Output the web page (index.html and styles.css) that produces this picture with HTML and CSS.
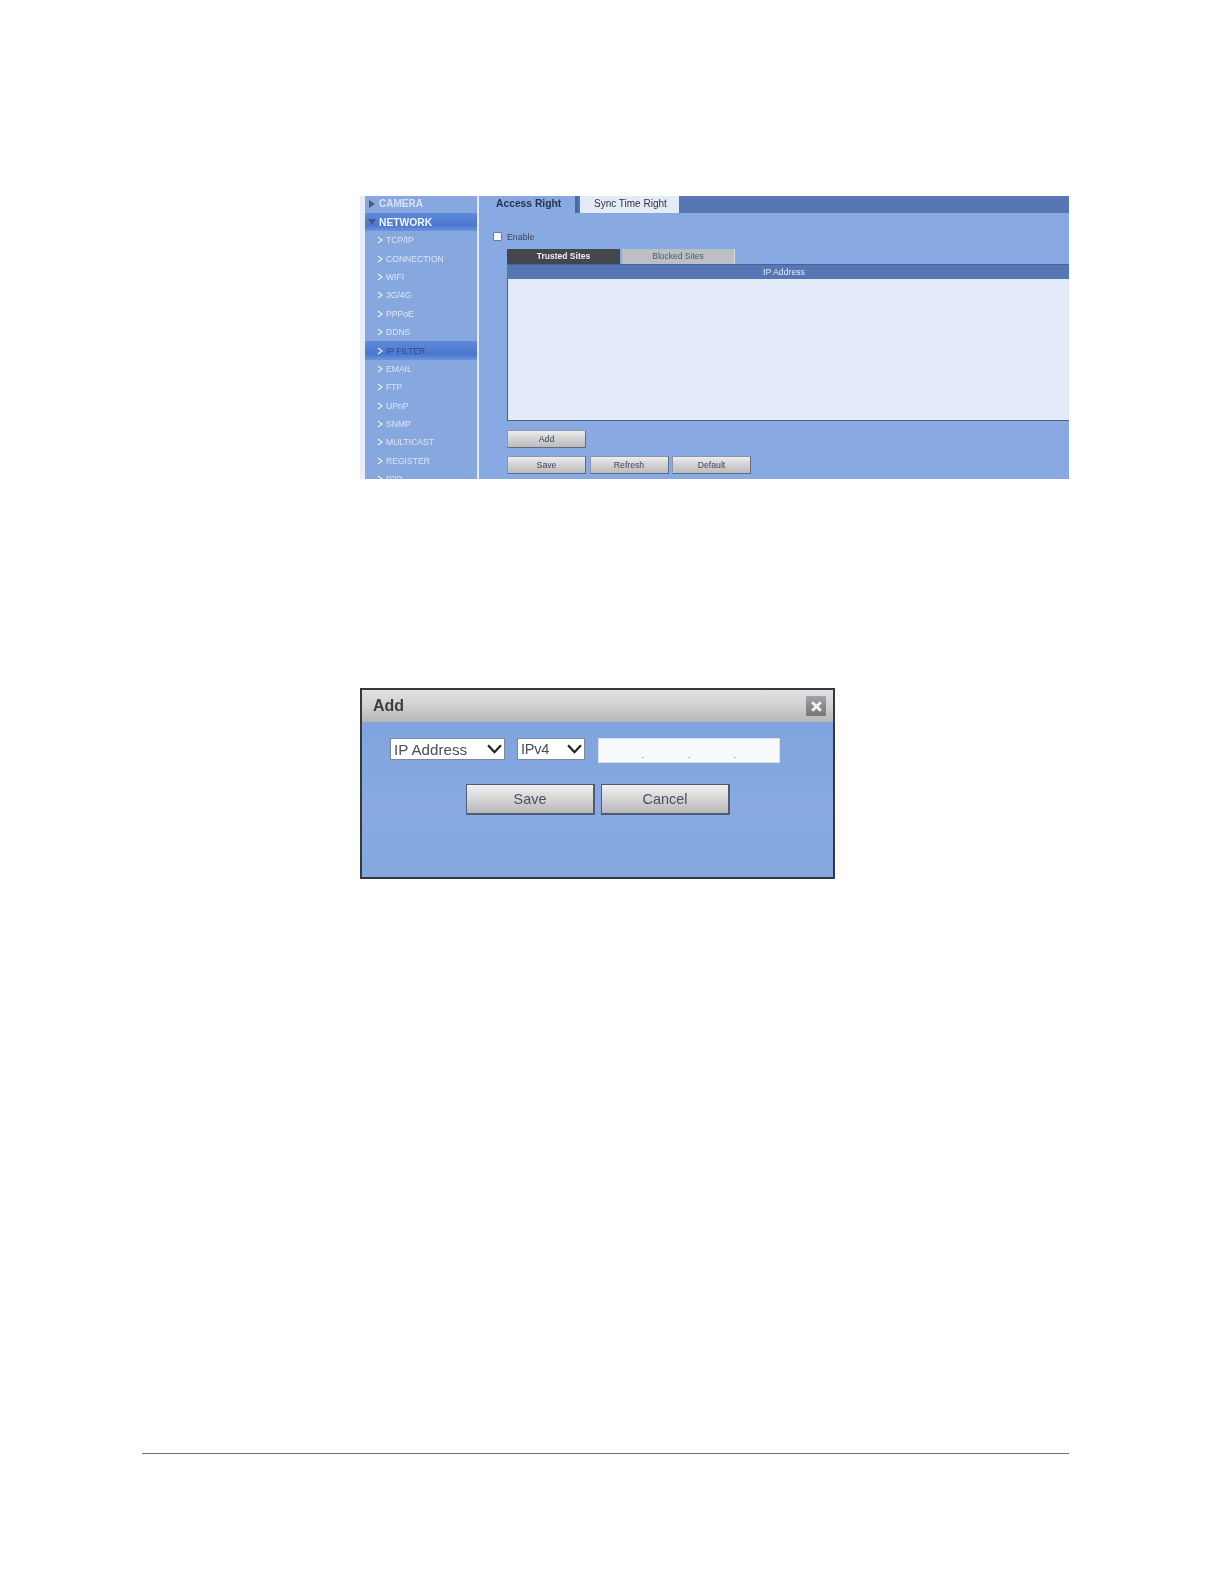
FILE: index.html
```html
<!DOCTYPE html>
<html lang="en">
<head>
<meta charset="utf-8">
<title>IP Filter</title>
<link rel="stylesheet" href="styles.css">
</head>
<body>
<main class="page">
  <section class="shot">
    <div class="strip"></div>
    <nav class="side">
      <div class="head first"><svg class="tri" viewBox="0 0 8 8"><path d="M1 0 L7 4 L1 8 Z"/></svg>CAMERA</div>
      <div class="head on"><svg class="tri" viewBox="0 0 8 8"><path d="M0 1 L8 1 L4 7 Z"/></svg>NETWORK</div>
      <div class="item"><svg class="chev" viewBox="0 0 6 8"><path d="M1 1 L5 4 L1 7"/></svg>TCP/IP</div>
      <div class="item"><svg class="chev" viewBox="0 0 6 8"><path d="M1 1 L5 4 L1 7"/></svg>CONNECTION</div>
      <div class="item"><svg class="chev" viewBox="0 0 6 8"><path d="M1 1 L5 4 L1 7"/></svg>WIFI</div>
      <div class="item"><svg class="chev" viewBox="0 0 6 8"><path d="M1 1 L5 4 L1 7"/></svg>3G/4G</div>
      <div class="item"><svg class="chev" viewBox="0 0 6 8"><path d="M1 1 L5 4 L1 7"/></svg>PPPoE</div>
      <div class="item"><svg class="chev" viewBox="0 0 6 8"><path d="M1 1 L5 4 L1 7"/></svg>DDNS</div>
      <div class="item sel"><svg class="chev" viewBox="0 0 6 8"><path d="M1 1 L5 4 L1 7"/></svg>IP FILTER</div>
      <div class="item"><svg class="chev" viewBox="0 0 6 8"><path d="M1 1 L5 4 L1 7"/></svg>EMAIL</div>
      <div class="item"><svg class="chev" viewBox="0 0 6 8"><path d="M1 1 L5 4 L1 7"/></svg>FTP</div>
      <div class="item"><svg class="chev" viewBox="0 0 6 8"><path d="M1 1 L5 4 L1 7"/></svg>UPnP</div>
      <div class="item"><svg class="chev" viewBox="0 0 6 8"><path d="M1 1 L5 4 L1 7"/></svg>SNMP</div>
      <div class="item"><svg class="chev" viewBox="0 0 6 8"><path d="M1 1 L5 4 L1 7"/></svg>MULTICAST</div>
      <div class="item"><svg class="chev" viewBox="0 0 6 8"><path d="M1 1 L5 4 L1 7"/></svg>REGISTER</div>
      <div class="item"><svg class="chev" viewBox="0 0 6 8"><path d="M1 1 L5 4 L1 7"/></svg>P2P</div>
    </nav>
    <div class="content">
      <div class="tabs">
        <div class="tab-active">Access Right</div>
        <div class="tab-other">Sync Time Right</div>
      </div>
      <div class="enable"><span class="check"></span><span>Enable</span></div>
      <div class="panel">
        <div class="subtabs">
          <div class="sub dark">Trusted Sites</div>
          <div class="sub grey">Blocked Sites</div>
        </div>
        <div class="thead">IP Address</div>
        <div class="tlist"></div>
        <div class="row add-row"><div class="btn">Add</div></div>
        <div class="row"><div class="btn">Save</div><div class="btn">Refresh</div><div class="btn">Default</div></div>
      </div>
    </div>
  </section>

  <section class="dialog">
    <header class="dtitle">
      <span>Add</span>
      <span class="close"><svg viewBox="0 0 12 12"><path d="M2 2 L10 10 M10 2 L2 10"/></svg></span>
    </header>
    <div class="fields">
      <div class="select wide">IP Address<svg viewBox="0 0 14 9"><path d="M1 1 L7 7.5 L13 1"/></svg></div>
      <div class="select narrow">IPv4<svg viewBox="0 0 14 9"><path d="M1 1 L7 7.5 L13 1"/></svg></div>
      <div class="ip"><i>.</i><i>.</i><i>.</i></div>
    </div>
    <div class="dbtns">
      <div class="dbtn">Save</div>
      <div class="dbtn">Cancel</div>
    </div>
  </section>

  <hr class="rule">
</main>
</body>
</html>
```
FILE: styles.css
```css
* { box-sizing: border-box; }
html, body { margin: 0; padding: 0; background: #fff; }
body { font-family: "Liberation Sans", Arial, sans-serif; color: #333; }
.page { height: 1584px; padding-top: 196px; overflow: hidden; }

.shot {
  display: flex;
  width: 709px;
  height: 283px;
  margin-left: 360px;
  overflow: hidden;
  background: #86a8e0;
  filter: blur(0.45px);
}
.strip { flex: 0 0 5px; background: #e6edf8; }
.side { flex: 0 0 112px; background: #86a8de; }
.head {
  display: flex;
  align-items: center;
  height: 18.4px;
  padding-left: 3px;
  font-size: 10px;
  font-weight: bold;
  color: #e4ecf8;
}
.head.first { height: 17px; padding-bottom: 2px; color: #d8e2f4; }
.head.on {
  height: 18px;
  font-size: 10.3px;
  color: #f2f6fd;
  background: linear-gradient(#5f8ad8, #4a78d0 70%, #6c95dc);
}
.tri { width: 8px; height: 8px; margin-right: 3px; fill: #4e5870; }
.item {
  display: flex;
  align-items: center;
  height: 18.4px;
  padding-left: 12px;
  font-size: 8.6px;
  color: #dde6f6;
}
.item.sel {
  color: #2e4a80;
  background: linear-gradient(#5f8ad8, #4a78d0 70%, #6c95dc);
}
.chev {
  width: 6px;
  height: 8px;
  margin-right: 3px;
  fill: none;
  stroke: #eef3fb;
  stroke-width: 1.1;
}
.content {
  flex: 1;
  min-width: 0;
  border-left: 2px solid #e2eaf7;
  background: #88a9e1;
}
.tabs { display: flex; height: 17px; background: #5677b3; }
.tab-active {
  flex: 0 0 99px;
  padding-left: 17px;
  border-right: 3px solid #4a6aa6;
  background: #88a9e1;
  font-size: 10.3px;
  font-weight: bold;
  line-height: 15px;
  color: #26344f;
}
.tab-other {
  flex: 0 0 99px;
  margin-left: 2px;
  padding-left: 14px;
  background: #e3ebf8;
  font-size: 10px;
  line-height: 15px;
  color: #333;
}
.enable {
  display: flex;
  align-items: center;
  height: 11px;
  margin-top: 18px;
  padding-left: 12px;
  font-size: 8.8px;
  color: #3a4660;
}
.check {
  width: 9px;
  height: 9px;
  margin: 0 5px 0 2px;
  background: #f4f6fa;
  border: 1px solid #6d7a90;
  border-radius: 1px;
}
.panel { margin: 7px 0 0 28px; }
.subtabs { display: flex; gap: 2px; height: 15px; }
.sub {
  flex: 0 0 113px;
  font-size: 8.5px;
  line-height: 15px;
  text-align: center;
}
.sub.dark { background: #43464b; color: #f0f0f0; font-weight: bold; }
.sub.grey { background: #bcbfc4; color: #4e5a70; border-right: 1px solid #cfe0d0; }
.thead {
  height: 15px;
  padding-right: 8px;
  background: #5677b3;
  border-top: 1px solid #45639c;
  font-size: 8.7px;
  line-height: 15px;
  text-align: center;
  color: #e6edf8;
}
.tlist {
  height: 142px;
  background: #e3ebf8;
  border: 1px solid #4e617f;
  border-width: 0 0 1px 1px;
}
.row { display: flex; gap: 3.5px; margin-top: 8px; }
.add-row { margin-top: 9px; }
.btn {
  flex: 0 0 79px;
  height: 18px;
  background: linear-gradient(#ededed, #cfcfcf 55%, #bdbdbd);
  border: 1px solid #5c6c86;
  border-top-color: #8a96aa;
  border-left-color: #8a96aa;
  font-size: 8.7px;
  line-height: 17px;
  text-align: center;
  color: #3c4657;
}

.dialog {
  width: 475px;
  height: 191px;
  margin: 209px 0 0 360px;
  background: linear-gradient(#7da2dd, #88a9e1 60%, #86a8e0);
  border: 2px solid #35383d;
  filter: blur(0.4px);
}
.dtitle {
  display: flex;
  align-items: center;
  justify-content: space-between;
  height: 32px;
  padding: 0 7px 0 11px;
  background: linear-gradient(#e2e2e0, #d0d0ce 50%, #b6b7b5);
  font-size: 16px;
  font-weight: bold;
  color: #3b3f45;
}
.close {
  display: flex;
  align-items: center;
  justify-content: center;
  width: 20px;
  height: 20px;
  background: linear-gradient(#9fa3a8, #74787d);
  border-radius: 1px;
}
.close svg { width: 13px; height: 13px; fill: none; stroke: #f4f4f4; stroke-width: 2.6; }
.fields {
  display: flex;
  align-items: flex-start;
  margin-top: 16px;
  padding-left: 28px;
}
.select {
  display: flex;
  align-items: center;
  justify-content: space-between;
  height: 22px;
  padding: 0 2px 0 3px;
  background: #fff;
  border: 1px solid #7a879c;
  font-size: 15.2px;
  color: #4a4f58;
}
.select svg {
  width: 15px;
  height: 10px;
  fill: none;
  stroke: #1e1f22;
  stroke-width: 2;
}
.wide { width: 115px; margin-right: 12px; }
.narrow { width: 68px; margin-right: 13px; font-size: 14.6px; letter-spacing: -0.3px; }
.ip {
  display: flex;
  justify-content: space-around;
  align-items: flex-end;
  width: 182px;
  height: 25px;
  padding: 0 21px;
  background: #f9fafb;
  border: 1px solid #d5dfee;
  font-size: 9px;
  line-height: 14px;
  color: #666;
}
.ip i { font-style: normal; }
.dbtns {
  display: flex;
  gap: 6px;
  margin-top: 21px;
  padding-left: 104px;
}
.dbtn {
  width: 129px;
  height: 31px;
  background: linear-gradient(#f0f0f0, #d2d2d2 55%, #b8b8b8);
  border: 1px solid #4d5b73;
  border-width: 1px 2px 2px 1px;
  font-size: 14.4px;
  line-height: 29px;
  text-align: center;
  color: #4b5058;
}

.rule {
  width: 927px;
  height: 1px;
  margin: 574px 0 0 142px;
  border: 0;
  background: #6f6f6f;
}
```
